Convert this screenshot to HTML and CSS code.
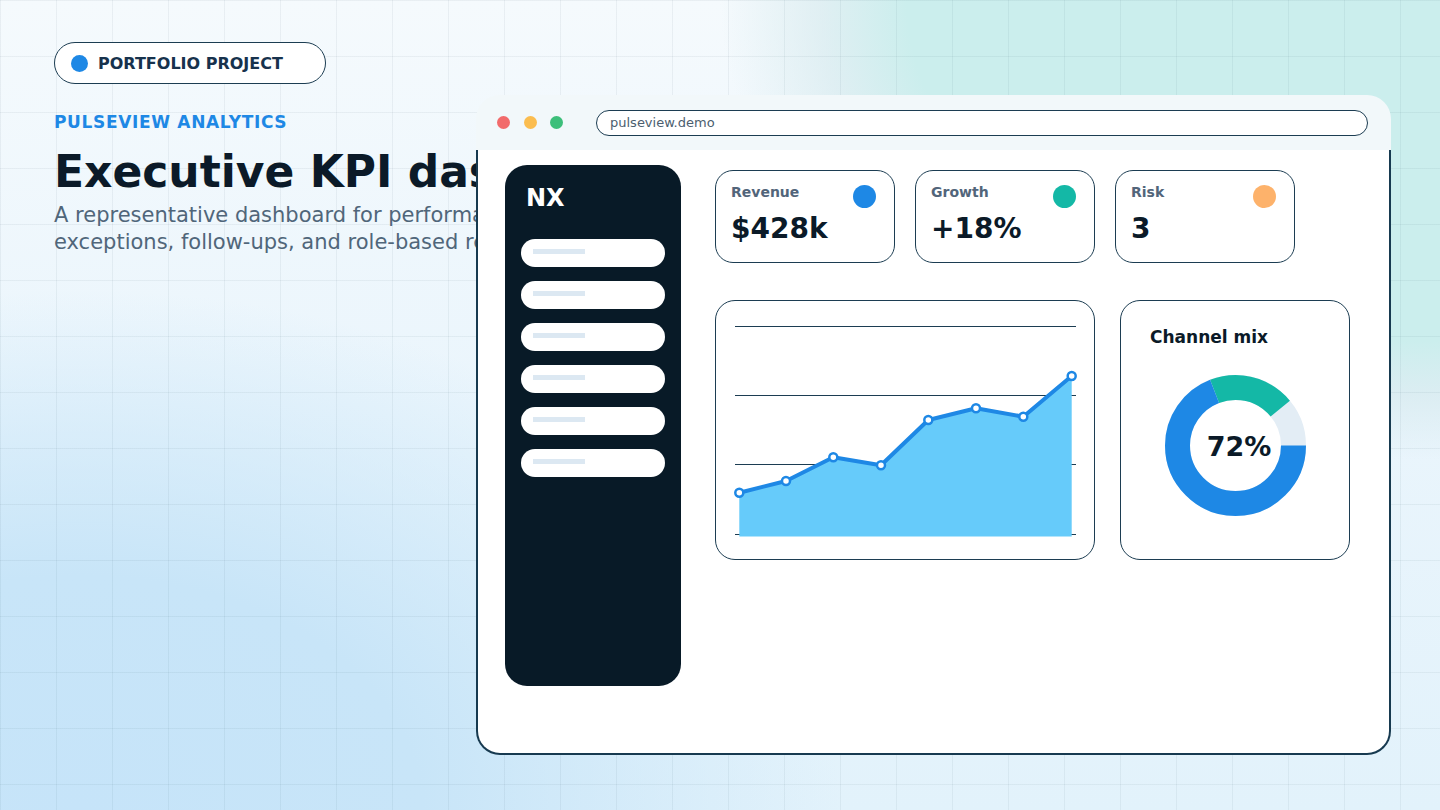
FILE: index.html
```html
<!DOCTYPE html>
<html lang="en">
<head>
  <meta charset="UTF-8" />
  <title>PulseView Analytics</title>
  <link rel="stylesheet" href="styles.css">
</head>
<body>
  <div class="page">
    <section class="intro">
      <div class="badge"><span class="badge-dot"></span>PORTFOLIO PROJECT</div>
      <p class="eyebrow">PULSEVIEW ANALYTICS</p>
      <h1>Executive KPI dashboard</h1>
      <p class="lead">A representative dashboard for performance tracking, KPI<br>exceptions, follow-ups, and role-based reporting.</p>
    </section>

    <div class="browser">
      <div class="browser-bar">
        <span class="light red"></span>
        <span class="light yellow"></span>
        <span class="light green"></span>
        <div class="url">pulseview.demo</div>
      </div>

      <div class="browser-body">
        <aside class="sidebar">
          <div class="logo">NX</div>
          <div class="nav">
            <div class="nav-item"><span></span></div>
            <div class="nav-item"><span></span></div>
            <div class="nav-item"><span></span></div>
            <div class="nav-item"><span></span></div>
            <div class="nav-item"><span></span></div>
            <div class="nav-item"><span></span></div>
          </div>
        </aside>

        <main class="main">
          <div class="kpis">
            <div class="kpi">
              <div class="kpi-top"><span class="kpi-label">Revenue</span><span class="kpi-dot blue"></span></div>
              <div class="kpi-value">$428k</div>
            </div>
            <div class="kpi">
              <div class="kpi-top"><span class="kpi-label">Growth</span><span class="kpi-dot teal"></span></div>
              <div class="kpi-value">+18%</div>
            </div>
            <div class="kpi">
              <div class="kpi-top"><span class="kpi-label">Risk</span><span class="kpi-dot orange"></span></div>
              <div class="kpi-value">3</div>
            </div>
          </div>

          <div class="charts">
            <div class="card chart-card">
              <svg width="380" height="260" viewBox="0 0 380 260">
                <g stroke="#1c3d52" stroke-width="1">
                  <line x1="20" y1="26.5" x2="361" y2="26.5" />
                  <line x1="20" y1="95.5" x2="361" y2="95.5" />
                  <line x1="20" y1="164.5" x2="361" y2="164.5" />
                  <line x1="20" y1="234.5" x2="361" y2="234.5" />
                </g>
                <polygon fill="#66cbfa" points="24.3,192.7 71,181 118.3,157.3 166,165.3 213.3,120 261,108.3 308.3,116.7 356.7,76 356.7,236.5 24.3,236.5" />
                <polyline fill="none" stroke="#1e88e5" stroke-width="4" stroke-linejoin="round" points="24.3,192.7 71,181 118.3,157.3 166,165.3 213.3,120 261,108.3 308.3,116.7 356.7,76" />
                <g fill="#fff" stroke="#1e88e5" stroke-width="2.5">
                  <circle cx="24.3" cy="192.7" r="4" />
                  <circle cx="71" cy="181" r="4" />
                  <circle cx="118.3" cy="157.3" r="4" />
                  <circle cx="166" cy="165.3" r="4" />
                  <circle cx="213.3" cy="120" r="4" />
                  <circle cx="261" cy="108.3" r="4" />
                  <circle cx="308.3" cy="116.7" r="4" />
                  <circle cx="356.7" cy="76" r="4" />
                </g>
              </svg>
            </div>

            <div class="card donut-card">
              <h2>Channel mix</h2>
              <svg class="donut" width="141" height="141" viewBox="0 0 141 141">
                <g fill="none" stroke-width="25">
                  <circle cx="70.5" cy="70.5" r="58" stroke="#e3edf5" />
                  <circle cx="70.5" cy="70.5" r="58" stroke="#14b8a6" stroke-dasharray="0 251.5 72.4 400" />
                  <circle cx="70.5" cy="70.5" r="58" stroke="#1e88e5" stroke-dasharray="251.5 400" />
                </g>
                <text x="74" y="80.5" text-anchor="middle" class="donut-text">72%</text>
              </svg>
            </div>
          </div>
        </main>
      </div>
    </div>
  </div>
</body>
</html>
```

FILE: styles.css
```css
* {
  box-sizing: border-box;
}
body {
  margin: 0;
  width: 1440px;
  height: 810px;
  overflow: hidden;
  font-family: 'DejaVu Sans', 'Noto Sans', sans-serif;
  color: #0b1a28;
  background:
    linear-gradient(rgba(23, 58, 80, 0.06) 1px, transparent 1px) 0 0 / 56px 56px,
    linear-gradient(90deg, rgba(23, 58, 80, 0.06) 1px, transparent 1px) 0 0 / 56px 56px,
    radial-gradient(ellipse 720px 460px at 1440px 0px, #cbeeed 0%, #cbeeed 74%, rgba(210, 232, 236, 0.6) 86%, rgba(226, 240, 248, 0) 100%),
    radial-gradient(ellipse 760px 520px at 80px 810px, #c6e4f9 0%, #c8e5f8 45%, rgba(200, 229, 248, 0) 100%),
    linear-gradient(180deg, #f5fafd 0%, #eaf5fc 50%, #e2f2fb 100%);
}
.page {
  position: relative;
  width: 1440px;
  height: 810px;
}
.intro {
  padding: 42px 0 0 54px;
}
.badge {
  display: flex;
  align-items: center;
  gap: 10px;
  width: 272px;
  height: 42px;
  padding-left: 16px;
  border: 1px solid #1c3d52;
  border-radius: 21px;
  background: #fff;
  font-size: 16px;
  font-weight: 700;
  color: #17324d;
}
.badge-dot {
  width: 17px;
  height: 17px;
  border-radius: 50%;
  background: #1e88e5;
}
.eyebrow {
  margin: 28px 0 0;
  font-size: 17px;
  line-height: 20px;
  font-weight: 700;
  letter-spacing: 0.66px;
  color: #1e88e5;
}
h1 {
  margin: 15px 0 0;
  font-size: 44px;
  line-height: 50px;
  font-weight: 700;
  color: #0b1a28;
  white-space: nowrap;
}
.lead {
  margin: 5px 0 0;
  font-size: 21px;
  line-height: 27px;
  color: #50667a;
  white-space: nowrap;
}

/* browser window lies over the hero text */
.browser {
  position: absolute;
  left: 476px;
  top: 95px;
  width: 915px;
  height: 660px;
  display: flex;
  flex-direction: column;
  border-radius: 24px;
}
.browser-bar {
  height: 55px;
  flex-shrink: 0;
  display: flex;
  align-items: center;
  padding: 0 23px 0 21px;
  background: #f2f8fa;
  border-radius: 24px 24px 0 0;
}
.light {
  width: 13px;
  height: 13px;
  border-radius: 50%;
  margin-right: 13.5px;
}
.light.red { background: #f26b6b; }
.light.yellow { background: #fbbd4f; }
.light.green { background: #3dbf7a; margin-right: 33px; }
.url {
  flex: 1;
  height: 26px;
  display: flex;
  align-items: center;
  padding-left: 13px;
  border: 1px solid #1c3d52;
  border-radius: 13px;
  background: #fff;
  font-size: 13px;
  color: #4b5e6f;
}
.browser-body {
  flex: 1;
  display: flex;
  padding: 15px 0 0 27px;
  background: #fff;
  border: 2px solid #173a50;
  border-top: none;
  border-radius: 0 0 24px 24px;
}
.sidebar {
  width: 176px;
  height: 521px;
  padding: 19px 16px 0;
  border-radius: 22px;
  background: #081a27;
}
.logo {
  padding-left: 5px;
  font-size: 24px;
  line-height: 28px;
  font-weight: 700;
  color: #fff;
}
.nav {
  display: flex;
  flex-direction: column;
  gap: 14px;
  margin-top: 27px;
}
.nav-item {
  height: 28px;
  padding: 10px 0 0 12px;
  border-radius: 14px;
  background: #fff;
}
.nav-item span {
  display: block;
  width: 52px;
  height: 5px;
  background: #dce8f2;
}
.main {
  margin-left: 34px;
  padding-top: 5px;
}
.kpis {
  display: flex;
  gap: 20px;
}
.kpi {
  width: 180px;
  height: 93px;
  padding: 13px 18px 0 15px;
  border: 1px solid #1c3d52;
  border-radius: 18px;
}
.kpi-top {
  display: flex;
  justify-content: space-between;
  align-items: flex-start;
}
.kpi-label {
  font-size: 14px;
  line-height: 17px;
  font-weight: 700;
  color: #52657a;
}
.kpi-dot {
  width: 23px;
  height: 23px;
  margin-top: 1px;
  border-radius: 50%;
}
.kpi-dot.blue { background: #1e88e5; }
.kpi-dot.teal { background: #14b8a6; }
.kpi-dot.orange { background: #fdb26b; }
.kpi-value {
  margin-top: 5px;
  font-size: 28px;
  line-height: 32px;
  font-weight: 700;
  color: #0b1a28;
}
.charts {
  display: flex;
  gap: 25px;
  margin-top: 37px;
}
.card {
  height: 260px;
  border: 1px solid #1c3d52;
  border-radius: 20px;
  background: #fff;
}
.chart-card {
  width: 380px;
  overflow: hidden;
}
.chart-card svg {
  display: block;
  margin: -1px;
}
.donut-card {
  width: 230px;
  padding: 26px 0 0 29px;
}
.donut-card h2 {
  margin: 0;
  font-size: 17px;
  line-height: 20px;
  font-weight: 700;
  color: #0b1a28;
}
.donut {
  display: block;
  margin: 28px 0 0 15px;
}
.donut-text {
  font-family: 'DejaVu Sans', sans-serif;
  font-size: 27px;
  font-weight: 700;
  fill: #0b1a28;
}
```
